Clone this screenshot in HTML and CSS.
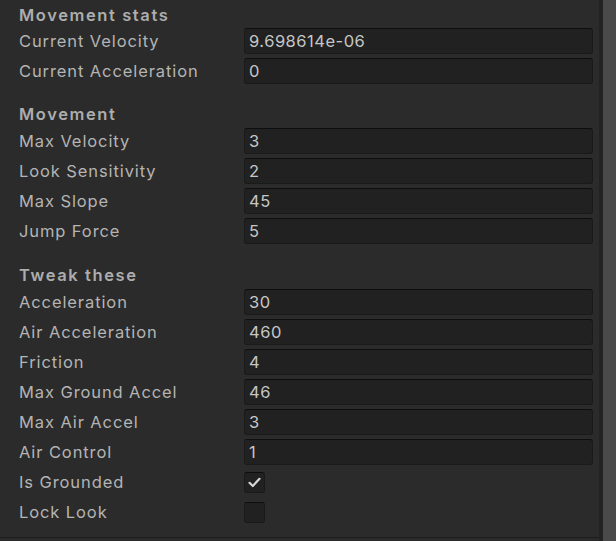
FILE: index.html
```html
<!DOCTYPE html>
<html>
<head>
<meta charset="utf-8">
<link rel="stylesheet" href="styles.css">
</head>
<body>
<div class="window">
  <div class="panel">
    <div class="content">
      <div class="header first">Movement stats</div>
      <div class="row"><span class="label">Current Velocity</span><div class="field">9.698614e-06</div></div>
      <div class="row"><span class="label">Current Acceleration</span><div class="field">0</div></div>

      <div class="header">Movement</div>
      <div class="row"><span class="label">Max Velocity</span><div class="field">3</div></div>
      <div class="row"><span class="label">Look Sensitivity</span><div class="field">2</div></div>
      <div class="row"><span class="label">Max Slope</span><div class="field">45</div></div>
      <div class="row"><span class="label">Jump Force</span><div class="field">5</div></div>

      <div class="header last">Tweak these</div>
      <div class="row"><span class="label">Acceleration</span><div class="field">30</div></div>
      <div class="row"><span class="label">Air Acceleration</span><div class="field">460</div></div>
      <div class="row"><span class="label">Friction</span><div class="field">4</div></div>
      <div class="row"><span class="label">Max Ground Accel</span><div class="field">46</div></div>
      <div class="row"><span class="label">Max Air Accel</span><div class="field">3</div></div>
      <div class="row"><span class="label">Air Control</span><div class="field">1</div></div>
      <div class="row"><span class="label">Is Grounded</span><div class="check"><svg width="13" height="11" viewBox="0 0 13 11"><path d="M1.5 5.8 L4.8 9 L11.5 1.8" fill="none" stroke="#d6d6d6" stroke-width="2.2" stroke-linecap="round" stroke-linejoin="round"/></svg></div></div>
      <div class="row"><span class="label">Lock Look</span><div class="check"></div></div>
    </div>
    <div class="bottom-line"></div>
  </div>
  <div class="strip"></div>
  <div class="scrollbar"></div>
</div>
</body>
</html>
```
FILE: styles.css
```css
html, body {
  margin: 0;
  padding: 0;
  background: #2b2b2b;
}
body {
  font-family: Inter, "Noto Sans", sans-serif;
  font-size: 16.5px;
  color: #b4b4b4;
}
.window {
  display: flex;
  width: 616px;
  height: 541px;
  overflow: hidden;
}
.panel {
  width: 599px;
  display: flex;
  flex-direction: column;
  background: #2b2b2b;
}
.content {
  flex: 1;
  padding-left: 19px;
}
.strip {
  width: 4px;
  background: #232323;
}
.scrollbar {
  flex: 1;
  background: #4a4a4a;
}
.bottom-line {
  height: 1px;
  background: #1c1c1c;
  margin-bottom: 3px;
}
.header {
  height: 22px;
  line-height: 22px;
  padding-top: 3px;
  margin-top: 14px;
  font-weight: 600;
  letter-spacing: 1.6px;
  color: #adadad;
}
.header.first {
  margin-top: 0;
  padding-top: 4px;
}
.header.last {
  margin-top: 15px;
}
.row {
  height: 30px;
  display: flex;
  align-items: center;
}
.header + .row {
  margin-top: 1px;
}
.header.first + .row {
  margin-top: 0;
}
.label {
  width: 225px;
  flex: none;
  white-space: nowrap;
  letter-spacing: 0.9px;
}
.field {
  box-sizing: border-box;
  width: 349px;
  height: 26px;
  line-height: 24px;
  background: #212121;
  border: 1px solid #1a1a1a;
  border-top-color: #0e0e0e;
  border-radius: 3px;
  padding-left: 4px;
  letter-spacing: 0.5px;
  color: #c6c6c6;
}
.check {
  box-sizing: border-box;
  width: 21px;
  height: 21px;
  background: #212121;
  border: 1px solid #1a1a1a;
  border-top-color: #0e0e0e;
  border-radius: 3px;
  display: flex;
  align-items: center;
  justify-content: center;
}
```
